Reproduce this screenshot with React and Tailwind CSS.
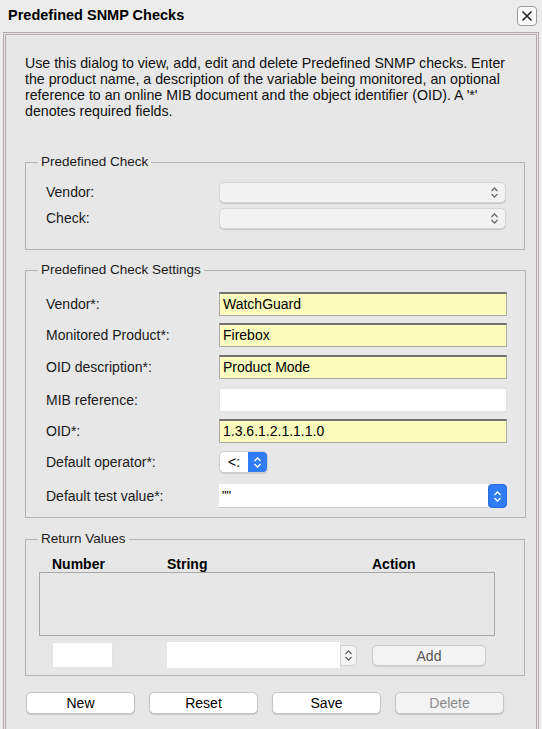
const font = { fontFamily: '"Liberation Sans", Arial, sans-serif' };

const Chevrons = ({ className = "", color = "#555" }) => (
  <svg width="9" height="13" viewBox="0 0 9 13" className={className}>
    <path d="M1.5 5 L4.5 2 L7.5 5" fill="none" stroke={color} strokeWidth="1.3" />
    <path d="M1.5 8 L4.5 11 L7.5 8" fill="none" stroke={color} strokeWidth="1.3" />
  </svg>
);

const GreySelect = () => (
  <div className="flex items-center justify-end w-[287px] h-[21px] rounded-[5px] bg-[#f2f2f2] border border-[#d6d6d6] shadow-[0_1px_0_#c8c8c8] pr-[6px]">
    <Chevrons color="#6a6a6a" />
  </div>
);

const TextField = ({ value, yellow }) => (
  <div
    className={`w-[288px] h-[24px] flex items-center px-[3px] text-[14px] text-black ${
      yellow
        ? "bg-[#fbfbbd] border border-[#a9a9a9] border-t-2 border-t-[#707070]"
        : "bg-white border border-[#e0e0e0]"
    }`}
  >
    {value}
  </div>
);

const Row = ({ label, children, className = "" }) => (
  <div className={`flex items-center ${className}`}>
    <div className="w-[173px] text-[14px] text-[#1a1a1a]">{label}</div>
    {children}
  </div>
);

const Button = ({ children, disabled }) => (
  <button
    className={`w-[109px] h-[22px] rounded-[5px] border border-[#c4c4c4] shadow-[0_1px_1px_rgba(0,0,0,0.15)] text-[14px] ${
      disabled ? "bg-[#f3f3f3] text-[#8a8a8a]" : "bg-white text-black"
    }`}
  >
    {children}
  </button>
);

const Group = ({ title, children, className = "" }) => (
  <fieldset className={`border border-[#b4b4b4] m-0 ${className}`}>
    <legend className="px-[3px] text-[13.5px] text-[#1a1a1a] leading-[14px]">{title}</legend>
    {children}
  </fieldset>
);

export default function App() {
  return (
    <div style={font} className="w-[542px] h-[729px] bg-[#ececec] flex flex-col overflow-hidden">
      <div className="h-[32px] flex items-center justify-between pl-[8px] pr-[5px] shrink-0">
        <span className="text-[14.5px] font-bold text-black">Predefined SNMP Checks</span>
        <button className="w-[20px] h-[20px] rounded-[4px] border border-[#9a9a9a] bg-[#fafafa] flex items-center justify-center">
          <svg width="12" height="12" viewBox="0 0 12 12">
            <path d="M1.5 1.5 L10.5 10.5 M10.5 1.5 L1.5 10.5" stroke="#222" strokeWidth="1.6" />
          </svg>
        </button>
      </div>

      <div className="mx-[3px] flex-1 border-[3px] border-double border-[#b3a9a9] border-b-0 bg-[#e7e7e7] pl-[19px] pr-[11px] pt-[20px]">
        <p className="text-[14.2px] leading-[16px] text-[#111] whitespace-nowrap">
          Use this dialog to view, add, edit and delete Predefined SNMP checks. Enter
          <br />
          the product name, a description of the variable being monitored, an optional
          <br />
          reference to an online MIB document and the object identifier (OID). A '*'
          <br />
          denotes required fields.
        </p>

        <Group title="Predefined Check" className="mt-[36px] pl-[12px] pr-[18px] pb-[20px]">
          <div className="pl-[8px]">
            <Row label="Vendor:" className="mt-[13px]">
              <GreySelect />
            </Row>
            <Row label="Check:" className="mt-[5px]">
              <GreySelect />
            </Row>
          </div>
        </Group>

        <Group title="Predefined Check Settings" className="mt-[13px] pl-[12px] pr-[18px] pb-[9px]">
          <div className="pl-[8px]">
            <Row label="Vendor*:" className="mt-[15px]">
              <TextField value="WatchGuard" yellow />
            </Row>
            <Row label="Monitored Product*:" className="mt-[7px]">
              <TextField value="Firebox" yellow />
            </Row>
            <Row label="OID description*:" className="mt-[8px]">
              <TextField value="Product Mode" yellow />
            </Row>
            <Row label="MIB reference:" className="mt-[9px]">
              <TextField value="" />
            </Row>
            <Row label="OID*:" className="mt-[7px]">
              <TextField value="1.3.6.1.2.1.1.1.0" yellow />
            </Row>
            <Row label="Default operator*:" className="mt-[8px]">
              <div className="flex h-[22px] w-[49px] rounded-[5px] border border-[#cfcfcf] bg-white overflow-hidden shadow-[0_1px_1px_rgba(0,0,0,0.12)]">
                <div className="flex-1 flex items-center justify-center text-[14px] text-black">&lt;:</div>
                <div className="w-[19px] bg-[#2f7cf6] flex items-center justify-center">
                  <Chevrons color="#fff" />
                </div>
              </div>
            </Row>
            <Row label="Default test value*:" className="mt-[11px]">
              <div className="flex h-[24px] w-[288px]">
                <div className="flex-1 bg-white border-b border-[#c8c8c8] flex items-center px-[3px] text-[13px] text-black">""</div>
                <div className="w-[19px] bg-[#2f7cf6] rounded-[4px] flex items-center justify-center border border-[#2a6de0]">
                  <Chevrons color="#fff" />
                </div>
              </div>
            </Row>
          </div>
        </Group>

        <Group title="Return Values" className="mt-[14px] pl-[12px] pr-[13px] pb-[7px]">
          <div className="pl-[1px]">
            <div className="flex text-[14px] font-bold text-black h-[16px] mt-[10px] leading-[16px]">
              <span className="ml-[13px] w-[115px]">Number</span>
              <span className="w-[205px]">String</span>
              <span>Action</span>
            </div>
            <div className="h-[64px] w-[456px] border border-[#a8a8a8] bg-[#e7e7e7]" />
            <div className="flex items-center mt-[6px] ml-[13px]">
              <div className="w-[61px] h-[26px] bg-white border border-[#e4e4e4]" />
              <div className="ml-[54px] flex items-center w-[190px] h-[26px]">
                <div className="flex-1 h-full bg-white" />
                <div className="w-[17px] h-[21px] rounded-r-[5px] border border-[#d0d0d0] bg-[#f4f4f4] flex items-center justify-center">
                  <Chevrons color="#666" />
                </div>
              </div>
              <button className="ml-[15px] w-[114px] h-[21px] rounded-[5px] border border-[#cccccc] bg-[#f3f3f3] text-[14px] text-[#555] shadow-[0_1px_1px_rgba(0,0,0,0.1)]">
                Add
              </button>
            </div>
          </div>
        </Group>

        <div className="flex justify-between mt-[16px] pl-[1px] pr-[21px]">
          <Button>New</Button>
          <Button>Reset</Button>
          <Button>Save</Button>
          <Button disabled>Delete</Button>
        </div>
      </div>
    </div>
  );
}
